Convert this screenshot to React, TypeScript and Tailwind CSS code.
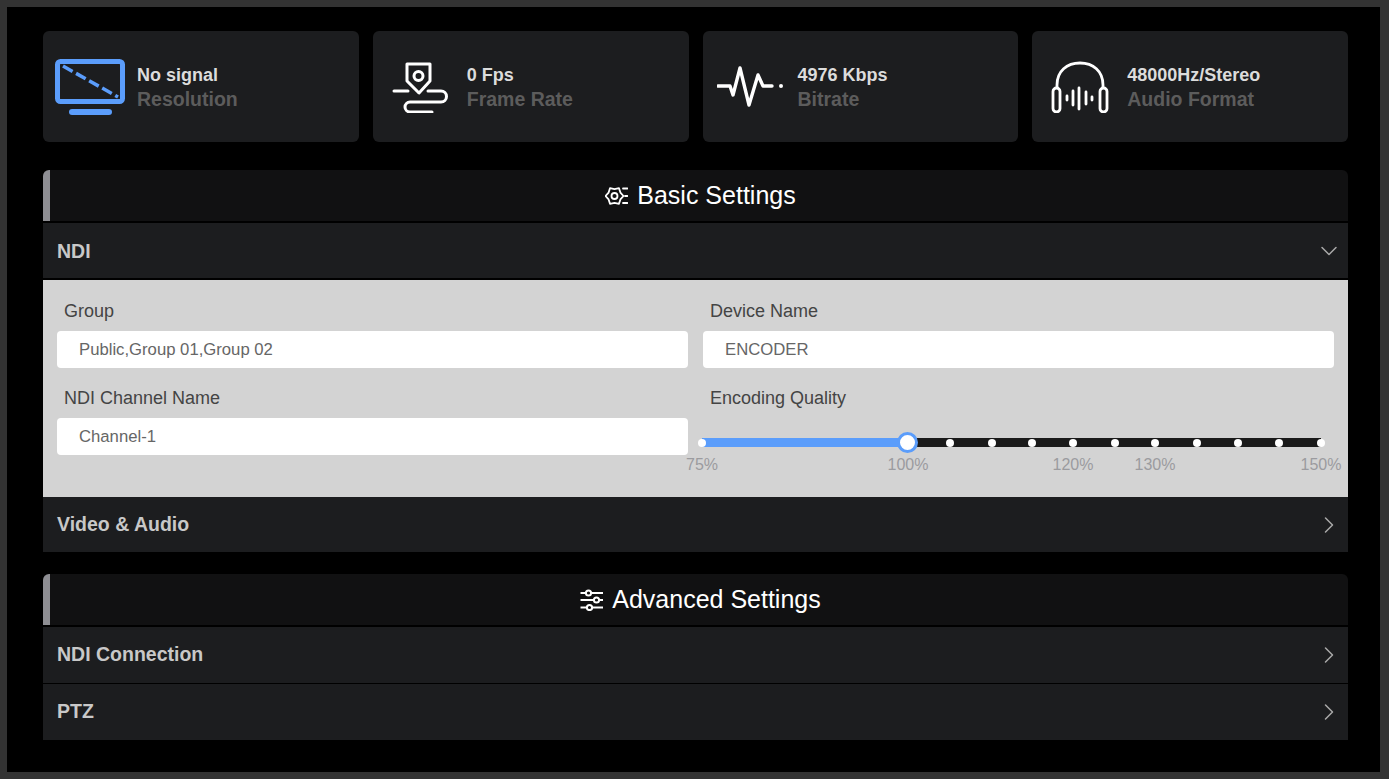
import React from 'react';
import { ChevronDown, ChevronRight } from 'lucide-react';

const MonitorIcon = () => (
  <svg width="70" height="56" viewBox="0 0 70 56" fill="none" className="shrink-0">
    <rect x="2.500" y="2.500" width="65" height="40" rx="3" stroke="#5b9dfb" strokeWidth="5" />
    <path d="M8 7 L63 38" stroke="#5b9dfb" strokeWidth="3.500" strokeDasharray="11 4" />
    <rect x="14" y="50" width="43" height="6" rx="3" fill="#5b9dfb" />
  </svg>
);

const FrameIcon = () => (
  <svg width="58" height="52" viewBox="0 0 58 52" fill="none" stroke="white" strokeWidth="3" strokeLinecap="round" strokeLinejoin="round" className="shrink-0">
    <path d="M15 3 H38 V20 L27 32 L15 20 Z" />
    <circle cx="26.500" cy="15" r="4.500" />
    <path d="M2 30 H16" />
    <path d="M36 30 H49 A5.500 5.500 0 0 1 49 41 H18 A5 5 0 0 0 18 51 H40" />
  </svg>
);

const PulseIcon = () => (
  <svg width="66" height="42" viewBox="0 0 66 42" fill="none" stroke="white" strokeWidth="3.400" strokeLinecap="round" strokeLinejoin="round" className="shrink-0">
    <path d="M1 20 H13 L16 29 L23 2 L32 39 L41 9 L46 20 H55" />
    <circle cx="64" cy="20" r="2" fill="white" stroke="none" />
  </svg>
);

const HeadphonesIcon = () => (
  <svg width="58" height="52" viewBox="0 0 58 52" fill="none" stroke="white" strokeWidth="2.800" strokeLinecap="round" className="shrink-0">
    <path d="M6 26 V24 C6 10 16 2 29 2 C42 2 52 10 52 24 V26" />
    <rect x="2" y="27" width="7" height="24" rx="3.500" />
    <rect x="49" y="27" width="7" height="24" rx="3.500" />
    <path d="M16 35 V39 M22 30 V44 M28 27 V48 M35 31 V43 M41 36 V39" />
  </svg>
);

const GearListIcon = () => (
  <svg width="23" height="20" viewBox="0 0 23 20" fill="none" stroke="white" strokeWidth="1.800" strokeLinecap="round" strokeLinejoin="round" className="shrink-0">
    <path d="M18.500 10 L15.400 13.400 L14 17.800 L9.500 16.800 L5 17.800 L3.600 13.400 L0.500 10 L3.600 6.600 L5 2.200 L9.500 3.200 L14 2.200 L15.400 6.600 Z" />
    <circle cx="9.500" cy="10" r="3" />
    <path d="M18 2.500 H22.500 M20 10 H22.500 M18 17 H22.500" />
  </svg>
);

const SlidersIcon = () => (
  <svg width="23" height="22" viewBox="0 0 23 22" fill="none" stroke="white" strokeWidth="2" className="shrink-0">
    <path d="M0.500 4 H23 M0.500 11 H23 M0.500 18.500 H23" />
    <circle cx="8.500" cy="4" r="2.600" fill="#111" />
    <circle cx="16.500" cy="11" r="2.600" fill="#111" />
    <circle cx="9.500" cy="18.500" r="2.600" fill="#111" />
  </svg>
);

const stats = [
  { icon: <MonitorIcon />, slot: 'w-[70px] ml-[12px] mr-[12px]', value: 'No signal', label: 'Resolution' },
  { icon: <FrameIcon />, slot: 'w-[58px] ml-[19px] mr-[17px]', value: '0 Fps', label: 'Frame Rate' },
  { icon: <PulseIcon />, slot: 'w-[66px] ml-[14px] mr-[15px]', value: '4976 Kbps', label: 'Bitrate' },
  { icon: <HeadphonesIcon />, slot: 'w-[58px] ml-[19px] mr-[18px]', value: '48000Hz/Stereo', label: 'Audio Format' },
];

const StatCard = ({ icon, slot, value, label }: (typeof stats)[number]) => (
  <div className="h-[111px] rounded-md bg-[#1c1d1f] flex items-center">
    <div className={`flex justify-center ${slot}`}>{icon}</div>
    <div className="font-bold pt-px">
      <div className="text-[18px] leading-[25px] text-[#dcdcdc]">{value}</div>
      <div className="text-[19.500px] leading-[25px] -mt-px text-[#5c5c5c]">{label}</div>
    </div>
  </div>
);

const SectionHeader = ({ icon, title }: { icon: React.ReactNode; title: string }) => (
  <div className="h-[51px] rounded-t-md bg-[#111112] border-l-[7px] border-[#8e8e93] flex items-center justify-center gap-[9px] pl-[3px]">
    {icon}
    <span className="text-[25px] text-white">{title}</span>
  </div>
);

const Row = ({ title, open, tall }: { title: string; open?: boolean; tall?: boolean }) => (
  <div className={`${tall ? 'h-[56px]' : 'h-[55px]'} bg-[#1c1d1f] flex items-center justify-between pl-[14px] pr-[5px]`}>
    <span className={`${open ? 'pt-[2px]' : ''} text-[19.500px] font-bold text-[#c8c8c8]`}>{title}</span>
    {open ? (
      <ChevronDown size={28} strokeWidth={1.300} className="text-[#a8a8a8]" />
    ) : (
      <ChevronRight size={28} strokeWidth={1.300} className="text-[#a8a8a8]" />
    )}
  </div>
);

const Field = ({ label, value }: { label: string; value: string }) => (
  <div>
    <div className="pl-[7px] text-[18px] leading-[22px] mb-[9px] text-[#444]">{label}</div>
    <input
      readOnly
      value={value}
      className="w-full h-[37px] rounded-[4px] bg-white pl-[22px] text-[16.700px] text-[#666] outline-none"
    />
  </div>
);

const stops = [0, 248, 290, 330, 371, 413, 453, 495, 536, 577, 619];
const marks = [
  { at: 0, text: '75%' },
  { at: 206, text: '100%' },
  { at: 371, text: '120%' },
  { at: 453, text: '130%' },
  { at: 619, text: '150%' },
];

const QualitySlider = () => (
  <div>
    <div className="pl-[7px] text-[18px] leading-[22px] mb-[9px] text-[#444]">Encoding Quality</div>
    <div className="relative h-[37px] w-[619px] -ml-px">
      <div className="absolute top-[20px] left-0 right-0 h-[9px] bg-[#1a1a1a]" />
      <div className="absolute top-[20px] left-0 w-[206px] h-[9px] bg-[#5b9dfb]" />
      {stops.map(x => (
        <div
          key={x}
          className="absolute top-[21px] -ml-[4px] w-[8px] h-[8px] rounded-full bg-white"
          style={{ left: x }}
        />
      ))}
      <div className="absolute top-[14px] left-[195px] w-[21px] h-[21px] rounded-full bg-white border-[3px] border-[#5b9dfb]" />
      {marks.map(m => (
        <span
          key={m.text}
          className="absolute top-[37px] -translate-x-1/2 text-[16px] leading-[20px] text-[#9b9b9f]"
          style={{ left: m.at }}
        >
          {m.text}
        </span>
      ))}
    </div>
  </div>
);

export default function App() {
  return (
    <div className="h-screen overflow-hidden bg-black border-[#333333] border-t-[7px] border-l-[7px] border-r-[9px] border-b-[7px] pt-[24px] pl-[36px] pr-[32px] font-['Liberation_Sans',Arial,sans-serif]">
      <div className="grid grid-cols-4 gap-[14px] mb-[28px]">
        {stats.map(s => (
          <StatCard key={s.label} {...s} />
        ))}
      </div>

      <div className="flex flex-col gap-[2px] mb-[22px]">
        <SectionHeader icon={<GearListIcon />} title="Basic Settings" />
        <Row title="NDI" open />
        <div className="bg-[#d3d3d3] pt-[20px] pb-[42px] px-[14px] grid grid-cols-2 gap-x-[15px] gap-y-[19px]">
          <Field label="Group" value="Public,Group 01,Group 02" />
          <Field label="Device Name" value="ENCODER" />
          <Field label="NDI Channel Name" value="Channel-1" />
          <QualitySlider />
        </div>
        <div className="-mt-[2px]">
          <Row title="Video & Audio" />
        </div>
      </div>

      <div className="flex flex-col">
        <div className="mb-[2px]">
          <SectionHeader icon={<SlidersIcon />} title="Advanced Settings" />
        </div>
        <div className="flex flex-col gap-px">
          <Row title="NDI Connection" tall />
          <Row title="PTZ" tall />
        </div>
      </div>
    </div>
  );
}
